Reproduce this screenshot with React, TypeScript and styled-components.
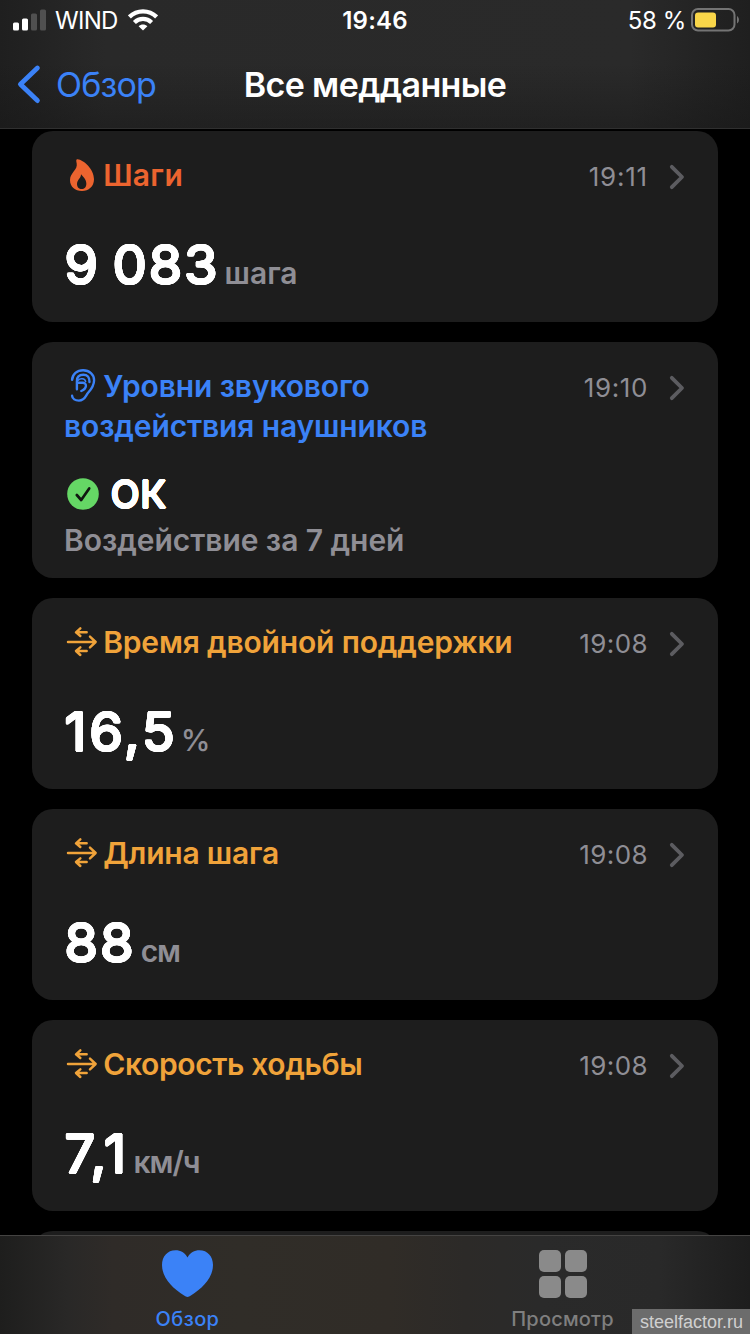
import React from 'react';
import styled, { createGlobalStyle, css } from 'styled-components';

const blue = '#3b82f7';
const orange = '#f0a33a';
const flameColor = '#ec642f';
const secondary = '#8f8e95';

// Thickens glyphs evenly in every direction so that stroke ends come out rounded.
const roundedGlyphs = (r: number) => {
  const steps = 16;
  const shadows = Array.from({ length: steps }, (_, i) => {
    const a = (i / steps) * Math.PI * 2;
    return `${(Math.cos(a) * r).toFixed(2)}px ${(Math.sin(a) * r).toFixed(2)}px 0 #fff`;
  }).join(', ');
  return css`
    text-shadow: ${shadows};
  `;
};

const GlobalStyle = createGlobalStyle`
  * { box-sizing: border-box; }
  body { margin: 0; background: #000; font-family: Inter, "Liberation Sans", sans-serif; }
  svg { display: block; }
`;

const Screen = styled.div`
  display: flex;
  flex-direction: column;
  width: 750px;
  height: 1334px;
  overflow: hidden;
  background: #000;
  color: #fff;
`;

const Header = styled.header`
  flex: none;
  height: 129px;
  border-bottom: 1px solid #303030;
  background:
    linear-gradient(to bottom, transparent 50%, rgba(22, 22, 22, 0.45)),
    linear-gradient(to right, #1f1f1f, #292929 14%, #2a2a2a 84%, #1f1f1f);
`;

const StatusBar = styled.div`
  display: grid;
  grid-template-columns: 1fr auto 1fr;
  align-items: center;
  height: 40px;
  padding: 0 11px 0 13px;
  font-size: 24px;
  line-height: 40px;
`;

const StatusSide = styled.div<{ $end?: boolean }>`
  display: flex;
  align-items: center;
  justify-content: ${p => (p.$end ? 'flex-end' : 'flex-start')};

  svg {
    margin-bottom: 2px;
  }
`;

const Carrier = styled.span`
  margin: 0 10px 0 9px;
  padding-top: 1px;
  letter-spacing: -0.7px;
`;

const Clock = styled.span`
  padding: 1px 2px 0 0;
  font-weight: 600;
  letter-spacing: 0.2px;
`;

const BatteryLevel = styled.span`
  margin-right: 5px;
  padding-top: 1px;
  letter-spacing: -0.35px;
`;

const NavBar = styled.nav`
  display: grid;
  grid-template-columns: 1fr auto 1fr;
  align-items: center;
  height: 88px;
  padding: 1px 17px 0;
  font-size: 34px;
  line-height: 88px;
`;

const BackLink = styled.a`
  display: flex;
  align-items: center;
  gap: 15px;
  color: ${blue};
  letter-spacing: -0.8px;

  svg {
    margin: -2px 0 0 -1px;
  }
`;

const PageTitle = styled.h1`
  margin: 0;
  font-size: 34px;
  font-weight: 600;
  letter-spacing: -0.6px;
`;

const Feed = styled.main`
  flex: 1;
  min-height: 0;
  overflow: hidden;
  display: flex;
  flex-direction: column;
  gap: 20px;
  padding: 2px 32px 0;
`;

const Card = styled.section<{ $tall?: boolean }>`
  flex: none;
  height: ${p => (p.$tall ? 236 : 191)}px;
  padding: 24px 32px 0;
  border-radius: 21px;
  background: #1d1d1d;
`;

const CardHead = styled.div`
  display: flex;
  align-items: flex-start;
  justify-content: space-between;
`;

const CardTitle = styled.h2<{ $color: string; $tracking: number }>`
  margin: 0;
  max-width: 460px;
  color: ${p => p.$color};
  font-size: 30px;
  font-weight: 600;
  line-height: 40px;
  letter-spacing: ${p => p.$tracking}px;

  svg {
    display: inline-block;
    vertical-align: -5px;
    margin: 0 5.2px 0 2px;
  }
`;

const CardMeta = styled.div<{ $tracking: number }>`
  display: flex;
  align-items: center;
  gap: 21px;
  padding-top: 2px;
  color: ${secondary};
  font-size: 26px;
  line-height: 40px;
  letter-spacing: ${p => p.$tracking}px;
`;

const Reading = styled.div`
  display: flex;
  align-items: baseline;
  margin-top: 38px;
  line-height: 60px;
`;

const Value = styled.span<{ $tracking: number }>`
  padding-left: 0.5px;
  font-size: 54px;
  font-weight: 400;
  letter-spacing: ${p => p.$tracking}px;
  word-spacing: -4.5px;
  ${roundedGlyphs(1.2)}
`;

const Unit = styled.span<{ $light?: boolean; $tracking: number }>`
  margin-left: ${p => (p.$light ? 3 : 5)}px;
  color: ${secondary};
  font-size: 30px;
  font-weight: ${p => (p.$light ? 500 : 600)};
  letter-spacing: ${p => p.$tracking}px;
`;

const StatusLine = styled.div`
  display: flex;
  align-items: center;
  gap: 12px;
  margin-top: 24px;
  padding-left: 2.6px;
  font-size: 38px;
  font-weight: 500;
  line-height: 48px;
  letter-spacing: 0.6px;
  ${roundedGlyphs(0.7)}
`;

const Caption = styled.p`
  margin: 2px 0 0;
  color: ${secondary};
  font-size: 30px;
  font-weight: 600;
  line-height: 40px;
  letter-spacing: -0.06px;
`;

const TabBar = styled.footer`
  position: relative;
  flex: none;
  display: grid;
  grid-template-columns: 1fr 1fr;
  height: 99px;
  border-top: 1px solid #444342;
  background: linear-gradient(to right, #1e1e1d, #292827 9%, #2f2b28 15%, #302d28 32%, #302c27 52%, #2c2a28 62%, #2a2a2a 72%, #292929 88%, #1d1d1d);
`;

const Tab = styled.a<{ $active?: boolean }>`
  display: flex;
  flex-direction: column;
  align-items: center;
  gap: 9px;
  padding-top: 14px;
  color: ${p => (p.$active ? blue : '#7f7f7f')};
  font-size: 20px;
  font-weight: 500;
  line-height: 25px;
  letter-spacing: ${p => (p.$active ? 0.4 : 0.2)}px;
`;

const Watermark = styled.div`
  position: absolute;
  right: 0;
  bottom: 0;
  width: 118px;
  height: 25px;
  padding-left: 8px;
  background: #6c6c6c;
  color: #d0d0d0;
  font: 18px/26px "Liberation Sans", Arial, sans-serif;
`;

const SignalIcon = () => (
  <svg width="33" height="22" viewBox="0 0 33 22" fill="#fff">
    <rect x="0" y="13.5" width="6" height="8" rx="1.5" />
    <rect x="9" y="9.5" width="6" height="12" rx="1.5" />
    <rect x="18" y="4.5" width="6" height="17" rx="1.5" fill="#505050" />
    <rect x="27" y="0.5" width="6" height="21" rx="1.5" fill="#505050" />
  </svg>
);

const WifiIcon = () => (
  <svg width="30" height="22" viewBox="0 0 30 22" fill="none" stroke="#fff" strokeWidth="4.2">
    <path d="M1.4 7.9 C9 0.4 21 0.4 28.6 7.9" />
    <path d="M6.4 13.4 C11.3 8.6 18.7 8.6 23.6 13.4" />
    <path d="M10.6 17.2 C13.1 14.8 16.9 14.8 19.4 17.2 L15 21.6 Z" fill="#fff" stroke="none" />
  </svg>
);

const BatteryIcon = () => (
  <svg width="48" height="24" viewBox="0 0 48 24">
    <rect x="1" y="1" width="42.5" height="21.5" rx="6" fill="none" stroke="#747474" strokeWidth="2" />
    <rect x="4" y="4.5" width="21" height="15" rx="3" fill="#f9d649" />
    <path d="M46 8 C48.6 9.6 48.6 14 46 15.6Z" fill="#747474" />
  </svg>
);

const BackIcon = () => (
  <svg width="25" height="40" viewBox="0 0 25 40" fill="none" stroke={blue} strokeWidth="4.8" strokeLinecap="round" strokeLinejoin="round">
    <path d="M21.4 4 L4.4 20.2 L21.4 36.6" />
  </svg>
);

const ChevronIcon = () => (
  <svg width="17" height="26" viewBox="0 0 17 26" fill="none" stroke="#5c5c60" strokeWidth="3.8" strokeLinecap="round" strokeLinejoin="round">
    <path d="M2.8 2.8 L13 13 L2.8 23.2" />
  </svg>
);

const FlameIcon = () => (
  <svg width="32" height="32" viewBox="108 87 96 96" fill={flameColor} fillRule="evenodd">
    <path d="M143 88 C160 90 192 116 192 148 C192 170 176 183 156 183 C135 183 120 170 120 150 C120 128 144 120 140 100 C139 94 137 88 143 88Z M153 133 C158 139 169 148 169 161 C169 171 163 177 155 177 C147 177 141 171 141 162 C141 149 153 146 153 133Z" />
  </svg>
);

const EarIcon = () => (
  <svg width="32" height="34" viewBox="-0.7 -0.4 32 34" fill="none" stroke={blue} strokeWidth="2.4" strokeLinecap="round" strokeLinejoin="round">
    <path d="M5.4 11.5 C5.6 5.8 10.4 1.8 16.4 1.8 C22.7 1.8 27.4 6 27.4 11.8 C27.4 17 24.8 20.6 21.4 24.4 C19 27 18.4 32.2 12.2 32.2 C8.6 32.2 5.6 30.4 5.4 27.4" />
    <path d="M22.8 13.6 C23 8.6 20.6 6.4 16.6 6.4 C12.4 6.4 10.2 9 10.2 12.8 L10.2 20.8" />
    <path d="M10.6 14.4 H16 C20.6 14.4 20.4 20.2 14.6 22.6" />
    <path d="M11.4 11.8 C13.2 9.8 18.2 9.6 18.9 13" strokeWidth="1.6" />
  </svg>
);

const WalkIcon = () => (
  <svg width="32" height="32" viewBox="108 79 96 96" fill="none" stroke={orange} strokeWidth="7.4" strokeLinecap="round" strokeLinejoin="round">
    <path d="M114 127 H196 M180 111 L197 127 L180 143" />
    <path d="M170 98 H139 M151 86 L138 98 L151 109" />
    <path d="M170 154 H139 M151 143 L138 154 L151 166" />
  </svg>
);

const CheckIcon = () => (
  <svg width="32" height="32" viewBox="0 0 32 32">
    <circle cx="16" cy="16" r="15.8" fill="#65d765" />
    <path d="M9.8 17 L14.2 22 L22.2 10.4" fill="none" stroke="#101810" strokeWidth="2.7" strokeLinecap="round" strokeLinejoin="round" />
  </svg>
);

const HeartIcon = () => (
  <svg width="52" height="48" viewBox="0.5 0 52 48" fill={blue}>
    <path d="M26 7.4 C23.3 2.5 19.2 0.2 14 0.2 C6 0.2 0.5 6.3 0.5 15 C0.5 28 11 38 22.6 45.6 C25 47.3 27 47.3 29.4 45.6 C41 38 51.5 28 51.5 15 C51.5 6.3 46 0.2 38 0.2 C32.8 0.2 28.7 2.5 26 7.4Z" />
  </svg>
);

const GridIcon = () => (
  <svg width="48" height="48" viewBox="0 0 48 48" fill="#8a8a8a">
    <rect width="22" height="22" rx="5" />
    <rect x="26" width="22" height="22" rx="5" />
    <rect y="26" width="22" height="22" rx="5" />
    <rect x="26" y="26" width="22" height="22" rx="5" />
  </svg>
);

interface HeadProps {
  icon: React.ReactNode;
  title: string;
  color: string;
  time: string;
  tracking: number;
  timeTracking?: number;
}

const Head = ({ icon, title, color, time, tracking, timeTracking = 0.4 }: HeadProps) => (
  <CardHead>
    <CardTitle $color={color} $tracking={tracking}>{icon}{title}</CardTitle>
    <CardMeta $tracking={timeTracking}>
      <span>{time}</span>
      <ChevronIcon />
    </CardMeta>
  </CardHead>
);

interface MetricProps extends HeadProps {
  value: string;
  unit: string;
  valueTracking: number;
  unitTracking?: number;
  lightUnit?: boolean;
}

const Metric = ({ value, unit, valueTracking, unitTracking = 0, lightUnit, ...head }: MetricProps) => (
  <Card>
    <Head {...head} />
    <Reading>
      <Value $tracking={valueTracking}>{value}</Value>
      <Unit $light={lightUnit} $tracking={unitTracking}>{unit}</Unit>
    </Reading>
  </Card>
);

export default function App() {
  return (
    <Screen>
      <GlobalStyle />
      <Header>
        <StatusBar>
          <StatusSide>
            <SignalIcon />
            <Carrier>WIND</Carrier>
            <WifiIcon />
          </StatusSide>
          <Clock>19:46</Clock>
          <StatusSide $end>
            <BatteryLevel>58 %</BatteryLevel>
            <BatteryIcon />
          </StatusSide>
        </StatusBar>
        <NavBar>
          <BackLink><BackIcon />Обзор</BackLink>
          <PageTitle>Все медданные</PageTitle>
        </NavBar>
      </Header>
      <Feed>
        <Metric icon={<FlameIcon />} title="Шаги" color={flameColor} time="19:11" tracking={0.3} timeTracking={0.8}
          value="9 083" unit="шага" valueTracking={2} />
        <Card $tall>
          <Head icon={<EarIcon />} title="Уровни звукового воздействия наушников" color={blue} time="19:10" tracking={-0.14} timeTracking={0.6} />
          <StatusLine><CheckIcon />ОК</StatusLine>
          <Caption>Воздействие за 7 дней</Caption>
        </Card>
        <Metric icon={<WalkIcon />} title="Время двойной поддержки" color={orange} time="19:08" tracking={-0.17}
          value="16,5" unit="%" valueTracking={3} lightUnit />
        <Metric icon={<WalkIcon />} title="Длина шага" color={orange} time="19:08" tracking={-0.22}
          value="88" unit="см" valueTracking={2.2} unitTracking={-1.3} />
        <Metric icon={<WalkIcon />} title="Скорость ходьбы" color={orange} time="19:08" tracking={-0.36}
          value="7,1" unit="км/ч" valueTracking={2.4} unitTracking={-1} />
        <Card />
      </Feed>
      <TabBar>
        <Tab $active><HeartIcon />Обзор</Tab>
        <Tab><GridIcon />Просмотр</Tab>
        <Watermark>steelfactor.ru</Watermark>
      </TabBar>
    </Screen>
  );
}
